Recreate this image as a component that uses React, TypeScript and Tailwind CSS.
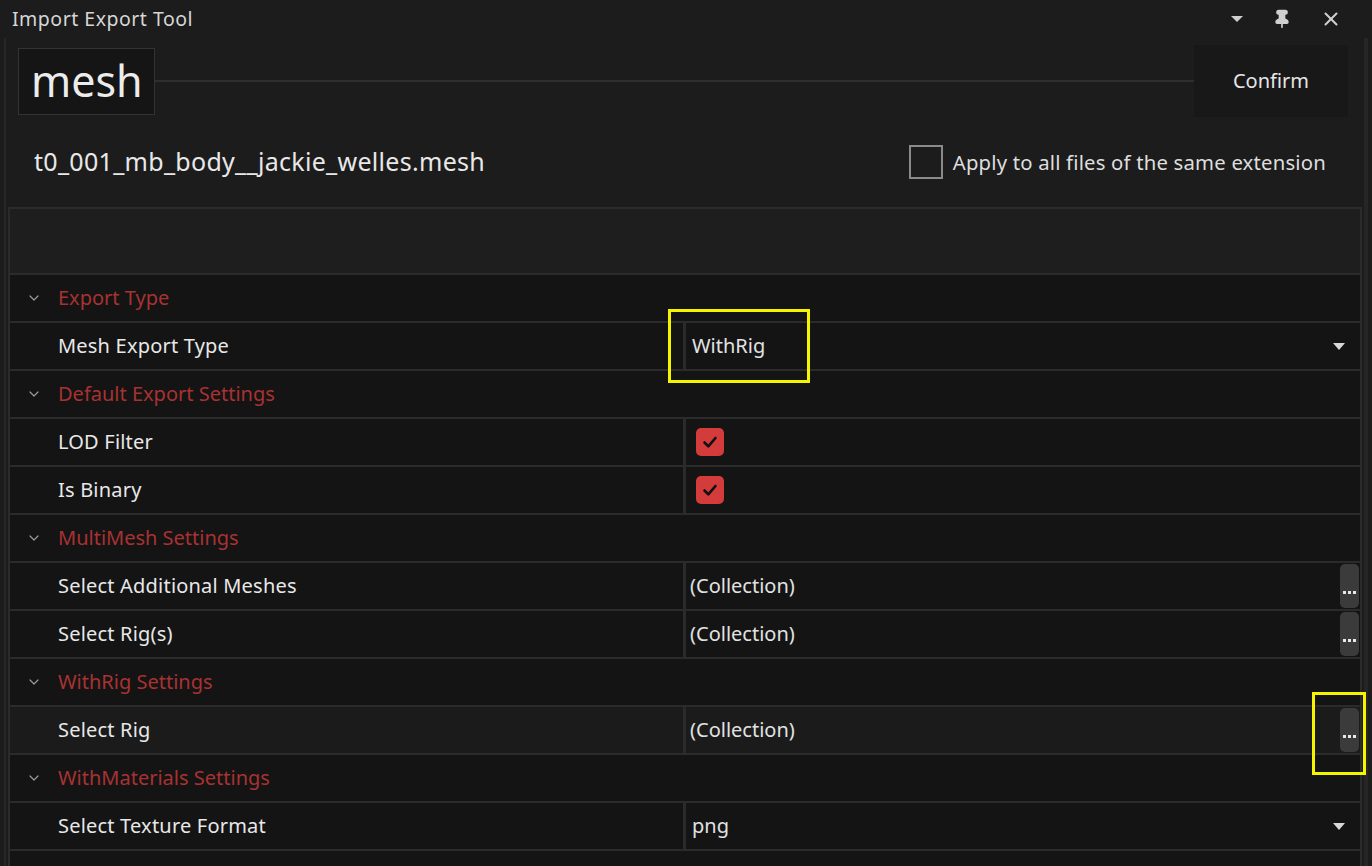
import { ChevronDown, Pin, X } from 'lucide-react';

type Row =
  | { kind: 'cat'; label: string }
  | { kind: 'prop'; label: string; value: 'dropdown' | 'check' | 'collection'; text?: string; hover?: boolean; mark?: boolean };

const ROWS: Row[] = [
  { kind: 'cat', label: 'Export Type' },
  { kind: 'prop', label: 'Mesh Export Type', value: 'dropdown', text: 'WithRig', mark: true },
  { kind: 'cat', label: 'Default Export Settings' },
  { kind: 'prop', label: 'LOD Filter', value: 'check' },
  { kind: 'prop', label: 'Is Binary', value: 'check' },
  { kind: 'cat', label: 'MultiMesh Settings' },
  { kind: 'prop', label: 'Select Additional Meshes', value: 'collection' },
  { kind: 'prop', label: 'Select Rig(s)', value: 'collection' },
  { kind: 'cat', label: 'WithRig Settings' },
  { kind: 'prop', label: 'Select Rig', value: 'collection', hover: true, mark: true },
  { kind: 'cat', label: 'WithMaterials Settings' },
  { kind: 'prop', label: 'Select Texture Format', value: 'dropdown', text: 'png' },
];

function Triangle() {
  return (
    <svg width="14" height="9" viewBox="0 0 14 9">
      <path d="M1 1h12L7 8z" fill="#d8d8d8" />
    </svg>
  );
}

function RedCheck() {
  return (
    <div className="w-[28px] h-[28px] rounded-[5px] bg-[#d43b3b] flex items-center justify-center">
      <svg width="16" height="14" viewBox="0 0 16 14">
        <path d="M2.5 7.5l3.8 3.8L13.5 3" fill="none" stroke="#111" strokeWidth="2.6" strokeLinecap="round" strokeLinejoin="round" />
      </svg>
    </div>
  );
}

function PropValue({ row }: { row: Extract<Row, { kind: 'prop' }> }) {
  if (row.value === 'check') {
    return (
      <div className="flex-1 flex items-center pl-[10px]">
        <RedCheck />
      </div>
    );
  }
  if (row.value === 'dropdown') {
    return (
      <div className="flex-1 flex items-center relative">
        <span className="pl-[6px] text-[20px] text-[#e2e2e2]">{row.text}</span>
        <span className="ml-auto mr-[14px]">
          <Triangle />
        </span>
        {row.mark && (
          <div className="absolute left-[-18px] top-[-14px] w-[142px] h-[74px] border-[3px] border-[#f5f500]" />
        )}
      </div>
    );
  }
  return (
    <div className="flex-1 flex items-center relative">
      <span className="pl-[4px] text-[20px] text-[#e2e2e2]">(Collection)</span>
      <div className="ml-auto mr-[1px] w-[19px] h-[44px] rounded-[5px] bg-[#3b3b3b] flex items-end justify-center pb-[14px] gap-[2px]">
        <span className="w-[3px] h-[3px] bg-[#e8e8e8]" />
        <span className="w-[3px] h-[3px] bg-[#e8e8e8]" />
        <span className="w-[3px] h-[3px] bg-[#e8e8e8]" />
      </div>
      {row.mark && (
        <div className="absolute right-[-6px] top-[-15px] w-[54px] h-[83px] border-[3px] border-[#f5f500]" />
      )}
    </div>
  );
}

export default function App() {
  return (
    <div
      className="w-[1372px] h-[866px] bg-[#1c1c1c] overflow-hidden flex flex-col text-[#e4e4e4]"
      style={{ fontFamily: '"Noto Sans", "Open Sans", sans-serif' }}
    >
      {/* Title bar */}
      <div className="h-[38px] flex items-center pl-[12px] pr-[30px]">
        <span className="text-[19.5px] tracking-[0.5px] text-[#d6d6d6]">Import Export Tool</span>
        <div className="ml-auto flex items-center gap-[28px] text-[#d0d0d0]">
          <svg width="14" height="8" viewBox="0 0 14 8">
            <path d="M1 1h12L7 7z" fill="#cfcfcf" />
          </svg>
          <Pin size={20} fill="#cfcfcf" strokeWidth={2} />
          <X size={22} strokeWidth={2.2} />
        </div>
      </div>

      <div className="flex-1 flex flex-col border-l-2 border-r-4 border-[#262626] ml-[4px] mr-[4px]">
        {/* Header: name + confirm */}
        <div className="flex items-center pl-[12px] pr-[16px] pt-[7px]">
          <div className="w-[137px] h-[67px] border border-[#333] bg-[#151515] flex items-center pl-[12px]">
            <span className="text-[43px] leading-none text-[#ececec] -mt-[2px]">mesh</span>
          </div>
          <div className="flex-1 h-[2px] bg-[#2e2e2e]" />
          <div className="w-[154px] h-[72px] bg-[#181818] flex items-center justify-center">
            <span className="text-[20px] text-[#e6e6e6]">Confirm</span>
          </div>
        </div>

        {/* File name */}
        <div className="h-[90px] flex items-center pl-[28px] pr-[38px]">
          <span className="text-[25px] tracking-[0.3px] text-[#e8e8e8]">t0_001_mb_body__jackie_welles.mesh</span>
          <div className="ml-auto flex items-center gap-[10px]">
            <div className="w-[34px] h-[34px] border-2 border-[#8a8a8a]" />
            <span className="text-[20.3px] tracking-[0.2px] text-[#dedede]">Apply to all files of the same extension</span>
          </div>
        </div>

        {/* Property grid */}
        <div className="flex-1 ml-[2px] mr-[2px] border-t-2 border-l-2 border-r-2 border-[#2b2b2b] flex flex-col">
          <div className="h-[66px] bg-[#1e1e1e] border-b-2 border-[#2b2b2b]" />
          {ROWS.map((row, i) =>
            row.kind === 'cat' ? (
              <div key={i} className="h-[48px] bg-[#141414] border-b-2 border-[#2b2b2b] flex items-center">
                <ChevronDown size={16} className="ml-[16px] text-[#9a9a9a]" strokeWidth={1.8} />
                <span className="ml-[16px] text-[20px] text-[#a83232]">{row.label}</span>
              </div>
            ) : (
              <div
                key={i}
                className={`h-[48px] border-b-2 border-[#2b2b2b] flex ${row.hover ? 'bg-[#1b1b1b]' : 'bg-[#141414]'}`}
              >
                <div className="w-[676px] flex items-center pl-[48px] border-r-[3px] border-[#2b2b2b]">
                  <span className="text-[20px] tracking-[0.2px] text-[#e8e8e8]">{row.label}</span>
                </div>
                <PropValue row={row} />
              </div>
            ),
          )}
          <div className="flex-1 bg-[#141414]" />
        </div>
      </div>
    </div>
  );
}
